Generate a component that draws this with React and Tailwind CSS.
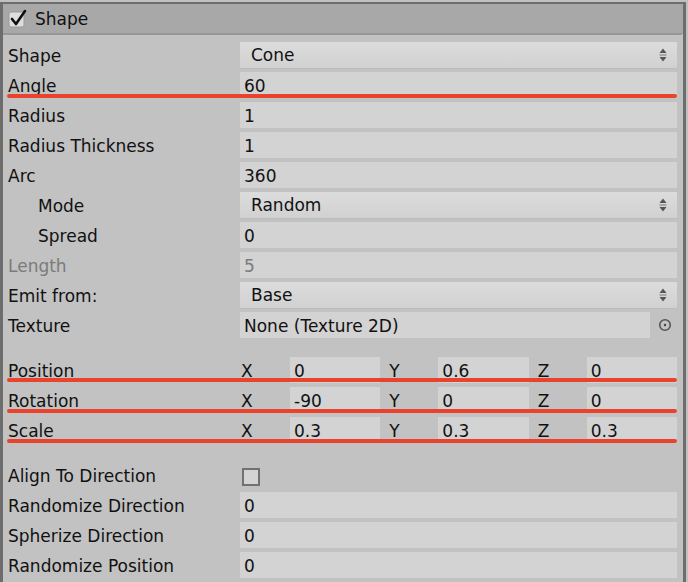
import React from "react";

const font = { fontFamily: '"DejaVu Sans", "Liberation Sans", sans-serif' };

const Arrows = () => (
    <svg width="8" height="14" viewBox="0 0 8 14" className="shrink-0">
        <path d="M4 0.5 L7.5 5 L0.5 5 Z" fill="#555" />
        <rect x="0.5" y="6.5" width="7" height="1" fill="#777" />
        <path d="M0.5 9 L7.5 9 L4 13.5 Z" fill="#555" />
    </svg>
);

const RedLine = ({ top = 25 }) => (
    <div
        className="absolute left-[4px] right-0 h-[4px] bg-[#e8432c] rounded-full"
        style={{ top }}
    />
);

const Field = ({ value, dim }) => (
    <div
        className={`flex-1 h-[26px] bg-[#d3d3d3] flex items-center pl-[4px] pt-[2px] ${
            dim ? "text-[#7b7b7b]" : "text-[#111]"
        }`}
    >
        {value}
    </div>
);

const Dropdown = ({ value }) => (
    <div className="flex-1 h-[27px] bg-gradient-to-b from-[#dcdcdc] to-[#d1d1d1] border-b border-[#bcbcbc] flex items-center justify-between pl-[11px] pr-[10px] text-[#111]">
        <span className="pt-[2px]">{value}</span>
        <Arrows />
    </div>
);

const Row = ({ label, indent, dim, line, children }) => (
    <div className="relative h-[30px] flex items-center">
        <div
            className={`w-[237px] shrink-0 pt-[2px] ${indent ? "pl-[35px]" : "pl-[5px]"} ${
                dim ? "text-[#7b7b7b]" : "text-[#111]"
            }`}
        >
            {label}
        </div>
        <div className="flex-1 flex items-center">{children}</div>
        {line && <RedLine top={line} />}
    </div>
);

const Vector = ({ label, values, line }) => (
    <Row label={label} line={line}>
        <div className="flex-1 grid grid-cols-3 gap-[8px]">
            {["X", "Y", "Z"].map((axis, i) => (
                <div key={axis} className="flex items-center">
                    <div className="w-[50px] shrink-0 pl-[1px] pt-[2px] text-[#111]">{axis}</div>
                    <div className="flex-1 h-[26px] bg-[#d3d3d3] flex items-center pl-[4px] pt-[2px] text-[#111]">
                        {values[i]}
                    </div>
                </div>
            ))}
        </div>
    </Row>
);

const App = () => {
    return (
        <div
            className="w-[688px] h-[582px] bg-[#c0c0c0] overflow-hidden text-[17px] leading-none"
            style={font}
        >
            <div className="mt-[2px] mr-[2px] h-[580px] border-t-2 border-l-[3px] border-r-[3px] border-[#6d6d6d] bg-[#c2c2c2] flex flex-col">
                {/* Header */}
                <div className="h-[31px] shrink-0 bg-[#a8a8a8] border-b-2 border-[#979797] rounded-br-[3px] flex items-center pl-[5px] gap-[5px]">
                    <svg width="22" height="20" viewBox="0 0 22 20">
                        <rect x="1" y="3" width="15" height="15" rx="2" fill="#dedede" stroke="#9a9a9a" />
                        <path d="M4 10 L8 15 L17 2" fill="none" stroke="#111" strokeWidth="2.6" strokeLinecap="round" strokeLinejoin="round" />
                    </svg>
                    <span className="text-[#111] pt-[2px]">Shape</span>
                </div>

                {/* Body */}
                <div className="pt-[5px] pr-[6px] flex flex-col">
                    <Row label="Shape"><Dropdown value="Cone" /></Row>
                    <Row label="Angle" line={24}><Field value="60" /></Row>
                    <Row label="Radius"><Field value="1" /></Row>
                    <Row label="Radius Thickness"><Field value="1" /></Row>
                    <Row label="Arc"><Field value="360" /></Row>
                    <Row label="Mode" indent><Dropdown value="Random" /></Row>
                    <Row label="Spread" indent><Field value="0" /></Row>
                    <Row label="Length" dim><Field value="5" dim /></Row>
                    <Row label="Emit from:"><Dropdown value="Base" /></Row>
                    <Row label="Texture">
                        <div className="flex-1 h-[26px] bg-[#d3d3d3] flex items-center pl-[4px] pt-[2px] text-[#111]">
                            None (Texture 2D)
                        </div>
                        <div className="w-[27px] flex justify-center pl-[2px]">
                            <svg width="14" height="14" viewBox="0 0 14 14">
                                <circle cx="7" cy="7" r="5.3" fill="none" stroke="#555" strokeWidth="1.6" />
                                <circle cx="7" cy="7" r="1.2" fill="#444" />
                            </svg>
                        </div>
                    </Row>

                    <div className="h-[15px]" />
                    <Vector label="Position" values={["0", "0.6", "0"]} line={23} />
                    <Vector label="Rotation" values={["-90", "0", "0"]} line={24} />
                    <Vector label="Scale" values={["0.3", "0.3", "0.3"]} line={24} />

                    <div className="h-[15px]" />
                    <Row label="Align To Direction">
                        <div className="ml-[2px] mt-[4px] w-[18px] h-[18px] border-2 border-[#717171] bg-[#d4d4d4]" />
                    </Row>
                    <Row label="Randomize Direction"><Field value="0" /></Row>
                    <Row label="Spherize Direction"><Field value="0" /></Row>
                    <Row label="Randomize Position"><Field value="0" /></Row>
                </div>
            </div>
        </div>
    );
};

export default App;
